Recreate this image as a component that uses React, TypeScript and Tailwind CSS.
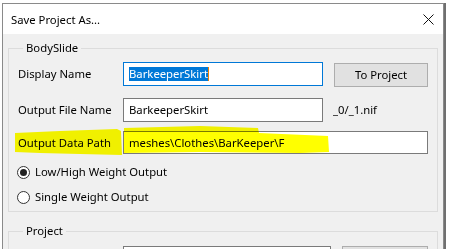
import React from 'react'

const Radio = ({ checked, label }: { checked?: boolean; label: string }) => (
  <div className='flex items-center h-[16px]'>
    <span className='w-[13px] h-[13px] rounded-full border border-[#333] bg-white flex items-center justify-center'>
      {checked && <span className='w-[7px] h-[7px] rounded-full bg-[#222]' />}
    </span>
    <span className='ml-[5px]'>{label}</span>
  </div>
)

const App = () => {
  return (
    <div className='relative w-[450px] h-[249px] overflow-hidden bg-white text-[11.3px] text-black leading-[16px]' style={{ fontFamily: '"Noto Sans", "Open Sans", sans-serif' }}>
      <div className='ml-[2px] mt-[3px] w-[442px] h-[260px] border-l border-t border-r border-[#8a8a8a] shadow-[2px_0_0_#6f6f6f] bg-[#f0f0f0]'>

        {/* title bar */}
        <div className='h-[30px] bg-white flex items-center justify-between pl-[8px] pr-[9px]'>
          <span className='mt-[1px]'>Save Project As...</span>
          <svg width='11' height='11' viewBox='0 0 11 11' className='mt-[1px]'>
            <path d='M0.5 0.5 10.5 10.5M10.5 0.5 0.5 10.5' stroke='#111' strokeWidth='1' fill='none' />
          </svg>
        </div>

        <fieldset className='mx-[5px] mt-[6px] border border-[#dcdcdc] pl-[9px] pb-[6px]'>
          <legend className='ml-[5px] px-[3px] h-[16px]'>BodySlide</legend>

          <div className='flex items-center mt-[6px] h-[24px]'>
            <span className='w-[105px]'>Display Name</span>
            <div className='w-[200px] h-[24px] border border-[#0078d7] bg-white flex items-center pl-[5px]'>
              <span className='bg-[#0078d7] text-white leading-[14px]'>BarkeeperSkirt</span>
              <span className='w-[1px] h-[14px] bg-[#f08000]' />
            </div>
            <button className='ml-[11px] w-[94px] h-[24px] mt-[2px] border border-[#adadad] bg-[#e1e1e1] text-center'>To Project</button>
          </div>

          <div className='flex items-center mt-[12px] h-[24px]'>
            <span className='w-[105px]'>Output File Name</span>
            <div className='w-[200px] h-[24px] border border-[#7a7a7a] bg-white flex items-center pl-[5px]'>BarkeeperSkirt</div>
            <span className='ml-[10px]'>_0/_1.nif</span>
          </div>

          <div className='flex items-center mt-[9px] h-[23px]'>
            <span className='w-[105px]'>Output Data Path</span>
            <div className='w-[305px] h-[23px] border border-[#7a7a7a] bg-white flex items-center pl-[5px]'>meshes\Clothes\BarKeeper\F</div>
          </div>

          <div className='mt-[10px] -ml-[1px]'>
            <Radio checked label='Low/High Weight Output' />
          </div>
          <div className='mt-[9px] -ml-[1px]'>
            <Radio label='Single Weight Output' />
          </div>
        </fieldset>

        <fieldset className='mx-[5px] mt-[11px] border border-[#dcdcdc] pl-[9px] pb-[6px]'>
          <legend className='ml-[5px] px-[3px] h-[16px]'>Project</legend>
          <div className='flex items-start mt-[7px]'>
            <span className='w-[105px]' />
            <div className='w-[208px] h-[24px] border border-[#7a7a7a] bg-white' />
            <div className='ml-[11px] w-[86px] h-[24px] border border-[#adadad] bg-[#e1e1e1]' />
          </div>
        </fieldset>
      </div>

      {/* marker highlight */}
      <svg className='absolute left-0 top-0 pointer-events-none mix-blend-multiply' width='450' height='249' viewBox='0 0 450 249'>
        <path d='M15 133 L60 131 L117 129 L121 131 L122 155 L80 154 L40 153 L15 152 Z' fill='#ffff00' />
        <path d='M124 128 L200 126 L258 128 L259 133 L328 136 L329 152 L300 153 L200 152 L124 153 Z' fill='#ffff00' />
      </svg>
    </div>
  )
}

export default App
